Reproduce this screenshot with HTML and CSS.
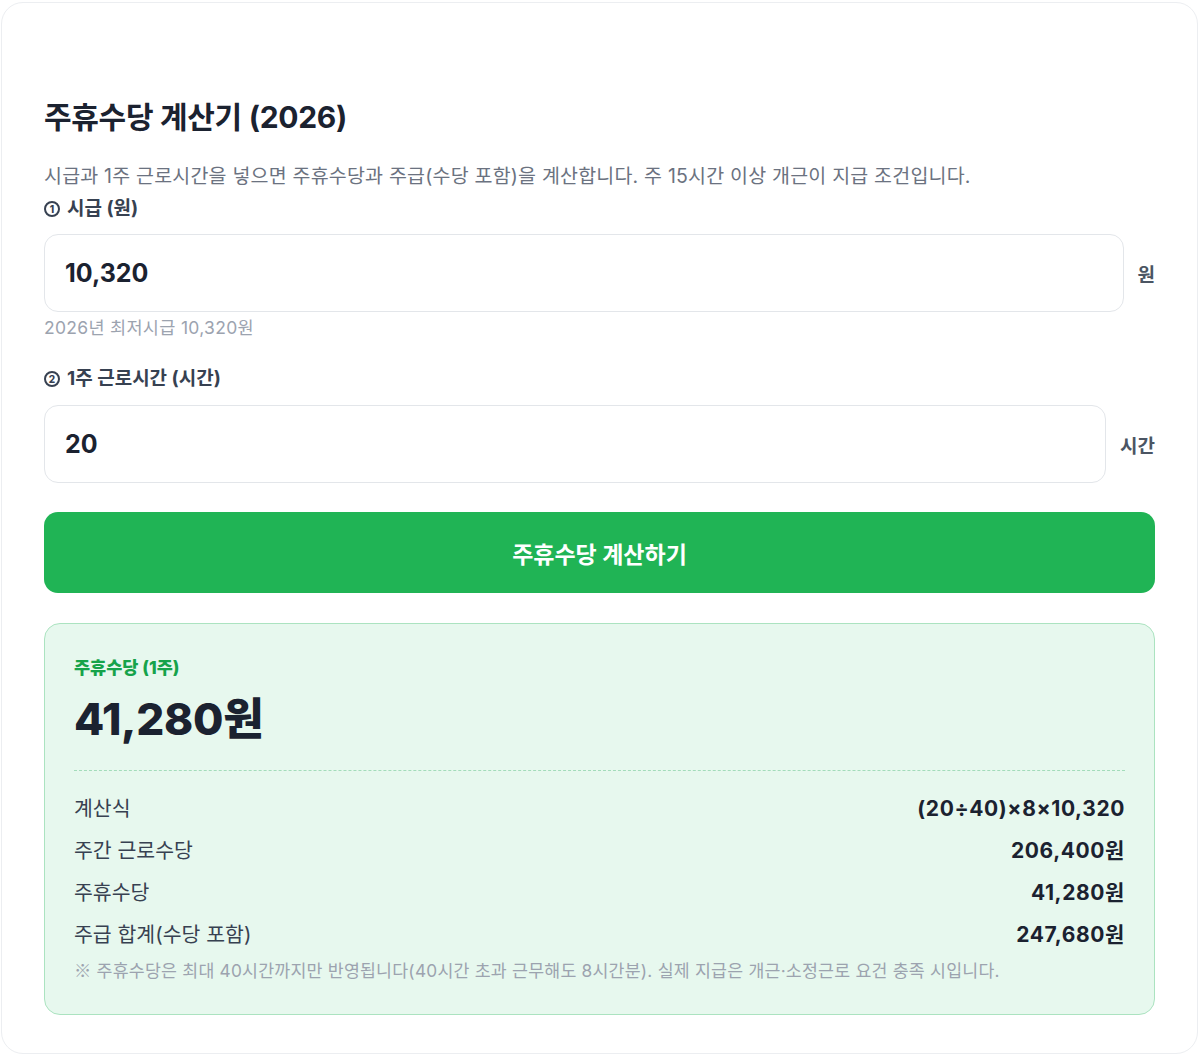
FILE: index.html
```html
<!DOCTYPE html>
<html lang="ko">
<head>
<meta charset="utf-8">
<link rel="stylesheet" href="styles.css">
</head>
<body>
<div class="page">
  <section class="card">
    <h1 class="title">주휴수당 계산기 (2026)</h1>
    <p class="desc">시급과 1주 근로시간을 넣으면 주휴수당과 주급(수당 포함)을 계산합니다. 주 15시간 이상 개근이 지급 조건입니다.</p>

    <div class="field">
      <label class="label"><span class="num">1</span>시급 (원)</label>
      <div class="input-row">
        <div class="input">10,320</div>
        <span class="unit">원</span>
      </div>
      <div class="hint">2026년 최저시급 10,320원</div>
    </div>

    <div class="field field-2">
      <label class="label"><span class="num">2</span>1주 근로시간 (시간)</label>
      <div class="input-row">
        <div class="input">20</div>
        <span class="unit">시간</span>
      </div>
    </div>

    <button class="btn">주휴수당 계산하기</button>

    <div class="result">
      <div class="result-label">주휴수당 (1주)</div>
      <div class="result-value">41,280원</div>
      <div class="divider"></div>
      <div class="rows">
        <div class="row"><span class="k">계산식</span><span class="v">(20÷40)×8×10,320</span></div>
        <div class="row"><span class="k">주간 근로수당</span><span class="v">206,400원</span></div>
        <div class="row"><span class="k">주휴수당</span><span class="v">41,280원</span></div>
        <div class="row"><span class="k">주급 합계(수당 포함)</span><span class="v">247,680원</span></div>
      </div>
      <p class="note"><span class="mark">※</span> 주휴수당은 최대 40시간까지만 반영됩니다(40시간 초과 근무해도 8시간분). 실제 지급은 개근·소정근로 요건 충족 시입니다.</p>
    </div>
  </section>
</div>
</body>
</html>
```

FILE: styles.css
```css
* { box-sizing: border-box; }
html, body { margin: 0; padding: 0; background: #ffffff; }
body {
  font-family: "Inter", "Noto Sans CJK KR", "Noto Sans", sans-serif;
  color: #1f2937;
}
.page { padding: 2px 2px 2px 1px; }
.card {
  background: #ffffff;
  border: 1px solid #eceef1;
  border-radius: 22px;
  padding: 96px 42px 38px 42px;
  min-height: 1050px;
}
.title {
  margin: 0;
  font-size: 30px;
  font-weight: 700;
  line-height: 36px;
  color: #1b2230;
  letter-spacing: -0.3px;
}
.desc {
  margin: 28px 0 0 0;
  font-size: 19.5px;
  letter-spacing: 0.2px;
  line-height: 26px;
  color: #6b7280;
}
.field { display: flex; flex-direction: column; }
.label {
  display: flex;
  align-items: center;
  font-size: 19px;
  font-weight: 700;
  line-height: 26px;
  color: #374151;
  margin-top: 7px;
}
.num {
  display: inline-flex;
  align-items: center;
  justify-content: center;
  width: 16px;
  height: 16px;
  border: 2px solid #374151;
  border-radius: 50%;
  font-size: 10px;
  line-height: 1;
  font-weight: 800;
  margin-right: 7px;
}
.field-2 .label { margin-top: 26px; }
.input-row {
  display: flex;
  align-items: center;
  gap: 14px;
  margin-top: 12px;
}
.field-2 .input-row { margin-top: 13px; }
.input {
  flex: 1;
  height: 78px;
  border: 1.5px solid #e3e6ea;
  border-radius: 14px;
  padding: 0 20px;
  display: flex;
  align-items: center;
  font-size: 25px;
  font-weight: 700;
  color: #1b2230;
}
.unit {
  font-size: 19px;
  font-weight: 700;
  color: #4b5563;
}
.hint {
  margin-top: 4px;
  font-size: 17.5px;
  letter-spacing: 0.3px;
  line-height: 24px;
  color: #9ca3af;
}
.btn {
  display: block;
  width: 100%;
  margin-top: 29px;
  height: 81px;
  border: none;
  border-radius: 14px;
  background: #20b455;
  color: #ffffff;
  font-family: inherit;
  font-size: 23px;
  font-weight: 700;
}
.result {
  margin-top: 30px;
  background: #e7f8ee;
  border: 1.5px solid #abe3c0;
  border-radius: 16px;
  padding: 31px 29px 31px 29px;
}
.result-label {
  font-size: 17.5px;
  font-weight: 800;
  line-height: 26px;
  color: #16a34a;
}
.result-value {
  margin-top: 10px;
  font-size: 44px;
  font-weight: 800;
  line-height: 56px;
  color: #1b2230;
  letter-spacing: -0.3px;
}
.divider {
  margin-top: 23px;
  border-top: 1.5px dashed #a3dcba;
}
.rows {
  margin-top: 24px;
  display: flex;
  flex-direction: column;
  gap: 14px;
}
.row {
  display: flex;
  justify-content: space-between;
  align-items: center;
  font-size: 20.5px;
  line-height: 28px;
}
.row .k { color: #374151; }
.row .v { font-weight: 700; color: #1b2230; font-size: 21px; letter-spacing: 0.6px; }
.note {
  margin: 9px 0 0 0;
  font-size: 17.3px;
  letter-spacing: 0.22px;
  line-height: 24px;
  color: #9ca3af;
}
.note .mark { font-family: "Noto Sans CJK KR", sans-serif; }
```
